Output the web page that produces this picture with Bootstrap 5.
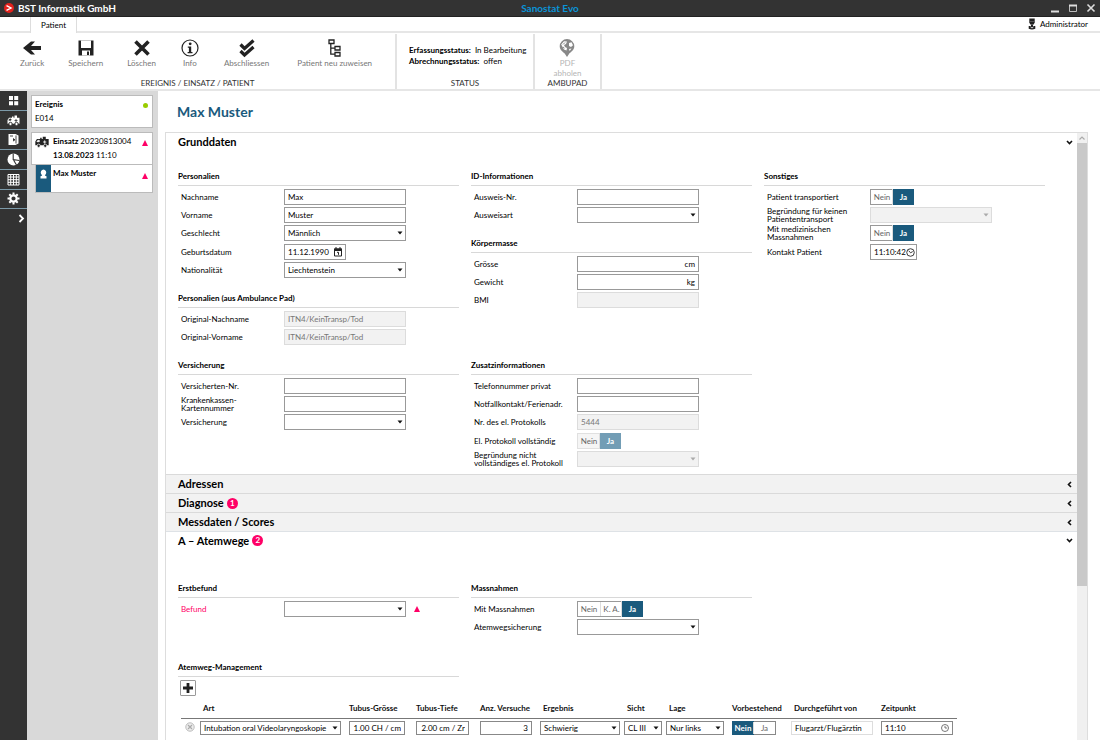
<!DOCTYPE html>
<html lang="de">
<head>
<meta charset="utf-8">
<meta name="viewport" content="width=device-width, initial-scale=1">
<title>Sanostat Evo</title>
<link rel="stylesheet" href="https://cdn.jsdelivr.net/npm/bootstrap@5.3.0/dist/css/bootstrap.min.css">
<style>
:root{--brand:#1a5a7d;--alert:#ff0066;--dark:#333;--rule:#e6e6e6}
body{font:8px/10px Lato,"Open Sans",sans-serif;color:#000;background:#fff}
svg{display:block}
button{font:inherit;color:inherit}
.titlebar{height:17px;background:var(--dark);border-bottom:1px solid #222}
.titlebar .firm{font-size:10px;font-weight:700;color:#fff}
.titlebar .product{font-size:10px;font-weight:700;color:#0a94d8}
.titlebar .side{flex:1 1 0}
.titlebar button,.rail button,.ribbon button,.plain-btn{background:none;border:0;padding:0}
.tabrow{height:16px;border-bottom:2px solid var(--rule)}
.tabrow .tab{margin-left:30px;width:47px;border:solid #ddd;border-width:0 1px;background:#fff;margin-bottom:-2px}
.ribbon{height:58px;border-bottom:2px solid var(--rule)}
.rgroup{border-right:2px solid #e3e3e3;margin:1px 0 0}
.rgroup.actions{width:397px}
.rgroup.state{width:138px}
.rgroup.pad{width:67px}
.ribbon button{color:#777;padding:0 12px}
.ribbon button.wide{padding-left:16px}
.ribbon button svg{width:20px;height:20px;margin:0 auto;color:#222}
.ribbon button:disabled{color:#b5b5b5;padding:0}
.ribbon button:disabled svg{color:#888}
.ribbon .caption{color:#333;line-height:11px}
.state-text{padding:11px 0 0 12px;line-height:11px}
.rail{width:27px;background:var(--dark);color:#fff}
.rail .items{height:137px}
.rail button{border-bottom:1px solid #7c99a8;color:#fff}
.rail button:last-child{border-bottom:0}
.rail svg{width:13px;height:13px}
.tree{width:131px;background:#d9d9d9;padding:4px 5px 0 4px}
.tree .box{background:#fff;border:1px solid #bbb;height:33px;padding:3px 4px 0 3px}
.tree .child{margin:-1px 0 0 4px;height:29px;padding:0 4px 0 0}
.tree .strip{width:15px;background:var(--brand);color:#fff;padding-top:4px}
.tree .child b{padding:3px 0 0 2px}
.dot{width:5px;height:5px;background:#99cc00}
.tri{width:6px;height:6px;fill:var(--alert)}
.patient-name{font-size:14px;line-height:18px;font-weight:700;color:var(--brand);padding:12px 0 11px 12px}
.workarea{padding:0 12px 0 7px}
.panelbox{border:1px solid #ddd;border-width:1px 1px 0}
.track{width:10px;background:#f0f0f0}
.track .up{height:10px;color:#aaa;padding:3px 2px}
.track .thumb{background:#c9c9c9;flex:0 0 443px}
.sect{height:20px;font-size:11px;line-height:14px;font-weight:700;border:0;background:#fff;padding:0 4px 2px 12px;color:#000}
.sect.collapsed{background:#f2f2f2;border-top:1px solid #dadada;height:19px;padding-bottom:0}
.sect.collapsed svg{transform:rotate(90deg)}
.sect svg{width:7px;height:7px}
.count{width:11px;height:11px;background:var(--alert);color:#fff;font-size:8px;line-height:11px;margin-left:3px}
.cols{display:grid;grid-template-columns:repeat(3,1fr);gap:12px;padding:0 32px 0 12px}
.base{padding-top:17px;padding-bottom:5px;grid-template-rows:177px}
.stack{display:flex;flex-direction:column;gap:12px}
.airway{padding-top:31px;row-gap:24px}
.fgroup h3{font-size:8px;line-height:12px;font-weight:700;color:#000;height:16px;margin:0 0 3px;border-bottom:1px solid #d8d8d8}
.rows{display:grid;grid-auto-rows:18px 18px 19px 18px;align-items:start}
.frow{display:grid;grid-template-columns:103px 1fr;padding-left:3px}
.frow>label,.frow>.lbl{line-height:8px;height:16px;display:flex;align-items:center;margin:0}
.form-control,.form-select{font-size:8px;line-height:10px;height:16px;min-height:0;padding:0 3px;border:1px solid #999;border-radius:0;color:#000;width:122px}
.form-select{background-position:right 2px center;background-size:6px 4px;padding-right:9px;background-image:url("data:image/svg+xml,%3Csvg xmlns='http://www.w3.org/2000/svg' viewBox='0 0 6 4'%3E%3Cpath d='M0.5 0.5h5L3 3.6z' fill='%23111'/%3E%3C/svg%3E")}
.form-control:disabled,.form-select:disabled{background-color:#f2f2f2;border-color:#dcdcdc;color:#777;opacity:1}
.form-select:disabled{background-image:url("data:image/svg+xml,%3Csvg xmlns='http://www.w3.org/2000/svg' viewBox='0 0 6 4'%3E%3Cpath d='M0.5 0.5h5L3 3.6z' fill='%23aaa'/%3E%3C/svg%3E")}
.pick{border:1px solid #999;height:16px;width:62px;background:#fff}
.pick input{border:0;height:12px;width:0;flex:1 1 0;min-width:0;padding-right:0}
.pick button{padding-right:2px}
.pick svg{width:10px;height:10px}
.pick.clock{width:47px}
.pick.clock button{padding-right:1px}
.pick.clock svg{width:9px;height:9px}
.unit{width:122px;border:1px solid #999;height:16px}
.unit input{border:0;height:12px;width:0;flex:1 1 0}
.unit span{padding-right:3px}
.seg{border:1px solid #999;height:16px;display:inline-flex;background:#fff}
.seg label{width:22px;line-height:14px;text-align:center;color:#666;border-left:1px solid #ddd}
.seg label:first-of-type{border-left:0}
.seg .btn-check:checked+label{background:var(--brand);color:#fff;font-weight:700;margin:-1px;line-height:16px}
.seg.off{background:#f5f5f5;border-color:#e0e0e0}
.seg.off .btn-check:checked+label{background:#729db5}
.add{margin:0 0 0 2px}
.add.plain-btn{width:16px;height:16px;border:1px solid #999;padding:2px;border-radius:1px}
.managed{padding:0 0 0 15px}
.grid-table{width:776px;table-layout:fixed;border-collapse:collapse}
.grid-table th{height:22px;padding:2px 0 0;font-weight:700;border-bottom:1px solid #777;color:#111}
.grid-table td{padding:2px 8px 0 0}
.grid-table .form-control,.grid-table .form-select,.grid-table .pick{width:100%}
.grid-table .form-control,.grid-table .form-select,.grid-table .seg,.grid-table .pick{height:14px;border-color:#888}
.grid-table .seg label{line-height:12px}
.grid-table .seg .btn-check:checked+label{line-height:14px}
.grid-table td.tight{padding-right:4px}
.grid-table td.loose{padding-right:11px}
.grid-table th.inset{padding-left:3px}
.grid-table .pick input{border:0;height:12px;width:0}
.grid-table .form-control.soft{border-color:#ddd}
.missing>label{color:var(--alert)}
</style>
</head>
<body>
<div class="d-flex flex-column vh-100 overflow-hidden">
  <header class="titlebar d-flex align-items-center flex-shrink-0">
    <div class="side d-flex align-items-center gap-1 ps-1">
      <svg width="10" height="10" viewBox="0 0 10 10"><circle cx="5" cy="5" r="5" fill="#e2211c"/><path d="M2.5 2.6 7 5 2.5 7.4" fill="none" stroke="#fff" stroke-width="1.4"/></svg>
      <span class="firm">BST Informatik GmbH</span>
    </div>
    <div class="product">Sanostat Evo</div>
    <div class="side d-flex justify-content-end align-items-center gap-2 pe-1">
      <button aria-label="Minimieren"><svg width="10" height="10" viewBox="0 0 10 10"><path d="M1 8.5h8" stroke="#ddd" stroke-width="2"/></svg></button>
      <button aria-label="Maximieren"><svg width="10" height="10" viewBox="0 0 10 10"><path d="M1.5 2v6.5h7V2" fill="none" stroke="#bbb"/><path d="M1 2.5h8" stroke="#ddd" stroke-width="2"/></svg></button>
      <button aria-label="Schliessen"><svg width="10" height="10" viewBox="0 0 10 10"><path d="m1.5 1.5 7 7m0-7-7 7" stroke="#ddd" stroke-width="1.6"/></svg></button>
    </div>
  </header>

  <div class="tabrow d-flex justify-content-between flex-shrink-0">
    <button class="tab plain-btn text-center">Patient</button>
    <div class="d-flex align-items-center gap-1 pe-2 me-1">
      <svg width="8" height="12" viewBox="0 0 8 12"><path d="M1.300.5h5.400v4L5.700 6.600H2.300L1.300 4.500z" fill="#222"/><path d="M3 6.500h2V8H3zM.7 8h6.600v2.800q-3.300 1.600-6.600 0z" fill="#222"/><path d="M2.400 8.800 4 10l1.600-1.200" stroke="#fff" stroke-width=".8" fill="none"/><path d="M2 3.500h4" stroke="#777" stroke-width=".6"/></svg>
      <span>Administrator</span>
    </div>
  </div>

  <div class="ribbon d-flex flex-shrink-0">
    <section class="rgroup actions d-flex flex-column">
      <div class="d-flex ps-1 pt-1 ms-1">
        <button><svg viewBox="0 0 20 20"><path d="m1 10 8-6.500h4L9 8h10v4H9l4 4.500H9z" fill="currentColor"/></svg>Zurück</button>
        <button><svg viewBox="0 0 20 20"><path d="M2.500 2.500h15v15h-15z" fill="currentColor"/><path d="M5 2.500h10v7.500H5zM6 12.500h8v5H6z" fill="#fff"/><path d="M11 13.500h2v3.500h-2z" fill="currentColor"/></svg>Speichern</button>
        <button><svg viewBox="0 0 20 20"><path d="m3.500 3.500 13 13m0-13-13 13" stroke="currentColor" stroke-width="3.600"/></svg>Löschen</button>
        <button><svg viewBox="0 0 20 20"><circle cx="10" cy="10" r="8" fill="none" stroke="currentColor" stroke-width="1.200"/><circle cx="10.200" cy="5.800" r="1.400" fill="currentColor"/><path d="M7.800 8.500h3.400v5.500h1.300v1.200H7.600V14h1.300V9.700H7.800z" fill="currentColor"/></svg>Info</button>
        <button><svg viewBox="0 0 20 20"><path d="m3.500 6.500 4 4 9-8M3.500 13l4 4 9-8" fill="none" stroke="currentColor" stroke-width="3.200"/></svg>Abschliessen</button>
        <button class="wide"><svg viewBox="0 0 20 20"><path d="M4 2h5v3.500H4zM10 8.500h5V12h-5zM10 14.500h5V18h-5zM5.800 5.500v10.700H10M5.800 10.200H10" fill="none" stroke="currentColor" stroke-width="1.300"/></svg>Patient neu zuweisen</button>
      </div>
      <div class="caption mt-auto text-center">EREIGNIS / EINSATZ / PATIENT</div>
    </section>
    <section class="rgroup state d-flex flex-column">
      <div class="state-text"><b>Erfassungsstatus:</b>&nbsp; In Bearbeitung<br><b>Abrechnungsstatus:</b>&nbsp; offen</div>
      <div class="caption mt-auto text-center">STATUS</div>
    </section>
    <section class="rgroup pad d-flex flex-column">
      <div class="pt-1 text-center"><button disabled><svg viewBox="0 0 20 20"><path d="M10 1a7.300 7.300 0 0 0-7.300 7.300C2.700 12.500 7 14.500 8 16l2 3 2-3c1-1.500 5.300-3.500 5.300-7.700A7.300 7.300 0 0 0 10 1z" fill="currentColor"/><path d="M4.200 6.500 7 3.300l3 .2-1 2.500-2 1 1 2 2 1-.500 2.500L7 11.500zM12 5l2.500-.800 1.500 3-2 1.800-2-1zM12 11l2.500-.500-1.800 2.500z" fill="#fff"/><path d="M6 6.500 8 4.500M6 9l1.500 1.200" stroke="currentColor"/></svg>PDF<br>abholen</button></div>
      <div class="caption mt-auto text-center">AMBUPAD</div>
    </section>
  </div>

  <div class="d-flex flex-grow-1 overflow-hidden">
    <nav class="rail flex-shrink-0" aria-label="Bereiche">
      <div class="items d-flex flex-column">
        <button class="flex-fill d-flex align-items-center justify-content-center" aria-label="Übersicht"><svg viewBox="0 0 13 13"><path d="M2 2h4v4H2zM7.200 2h4v4h-4zM2 7.200h4v4H2zM7.200 7.200h4v4h-4z" fill="#fff"/></svg></button>
        <button class="flex-fill d-flex align-items-center justify-content-center" aria-label="Einsätze"><svg viewBox="0 0 13 13"><path d="M.5 6 2 3.800h3V2.500h1.500v1.300h1V1.500H10v2.300h2.500v6H.5z" fill="#fff"/><circle cx="3.500" cy="10" r="1.700" fill="#fff" stroke="#333"/><circle cx="9.500" cy="10" r="1.700" fill="#fff" stroke="#333"/><path d="M9 5v3M7.500 6.500h3M1.800 6.200 2.600 5H4v1.200z" stroke="#333" stroke-width=".8" fill="#333"/></svg></button>
        <button class="flex-fill d-flex align-items-center justify-content-center" aria-label="Protokolle"><svg viewBox="0 0 13 13"><path d="M1.500 1h7l3 1.500v8L8.500 12h-7z" fill="#fff"/><path d="M9 2.500v8M3 3h3M6 5.500l2 1.300-2 1.300" stroke="#333" fill="#333" stroke-width=".9"/></svg></button>
        <button class="flex-fill d-flex align-items-center justify-content-center" aria-label="Statistik"><svg viewBox="0 0 13 13"><circle cx="6.500" cy="6.500" r="6" fill="#fff"/><path d="M6.200.5v6l6 1M6.200 6.500 9.500 12" stroke="#333" stroke-width="1.100" fill="none"/></svg></button>
        <button class="flex-fill d-flex align-items-center justify-content-center" aria-label="Tabelle"><svg viewBox="0 0 13 13"><path d="M1 1.500h11v10.500H1zM1 4h11M1 6.700h11M1 9.300h11M3.700 1.500V12M6.500 1.500V12M9.300 1.500V12" stroke="#fff" fill="none"/></svg></button>
        <button class="flex-fill d-flex align-items-center justify-content-center" aria-label="Einstellungen"><svg viewBox="0 0 13 13"><circle cx="6.500" cy="6.500" r="3.200" fill="none" stroke="#fff" stroke-width="2.200"/><path d="M6.500.5v2.200M6.500 10.300v2.200M.5 6.500h2.200M10.300 6.500h2.200M2.300 2.300l1.500 1.500M9.200 9.200l1.500 1.500M2.300 10.700l1.500-1.500M9.200 3.800l1.500-1.500" stroke="#fff" stroke-width="2"/></svg></button>
        <button class="flex-fill d-flex align-items-center justify-content-end" aria-label="Erweitern"><svg viewBox="0 0 13 13"><path d="m5.500 3 3.500 3.500L5.500 10" fill="none" stroke="#fff" stroke-width="1.800"/></svg></button>
      </div>
    </nav>

    <aside class="tree flex-shrink-0">
      <div class="box d-flex justify-content-between mb-1">
        <div><b class="d-block mb-1">Ereignis</b>E014</div>
        <span class="dot rounded-circle mt-1 d-block"></span>
      </div>
      <div class="box d-flex">
        <svg class="me-1" width="14" height="12" viewBox="0 0 13 11"><path d="M.3 5 1.800 2.800h3V1.500h1.400v1.300h1V.6H10v2.200h2.700v5.800H.3z" fill="#222"/><circle cx="3.400" cy="9" r="1.500" fill="#222" stroke="#fff" stroke-width=".7"/><circle cx="9.500" cy="9" r="1.500" fill="#222" stroke="#fff" stroke-width=".7"/><path d="M9 4v3M7.500 5.500h3M1.800 5.200 2.600 4H4v1.200z" stroke="#fff" stroke-width=".8" fill="#fff"/></svg>
        <div class="flex-fill"><b>Einsatz</b> 20230813004<div class="pt-1"><b>13.08.2023</b> 11:10</div></div>
        <svg class="tri mt-1" viewBox="0 0 6 6"><path d="m3 0 3 6H0z"/></svg>
      </div>
      <div class="box child d-flex">
        <div class="strip"><svg width="14" height="11" viewBox="0 0 14 11"><path d="M7.500.5a3 3 0 0 1 2.500 4.200L8.800 6.500l1.700.8v2.200h-6V7.300l1.700-.8L5 4.700A3 3 0 0 1 7.500.5z" fill="#fff"/></svg></div>
        <b class="flex-fill">Max Muster</b>
        <svg class="tri mt-2" viewBox="0 0 6 6"><path d="m3 0 3 6H0z"/></svg>
      </div>
    </aside>

    <main class="workarea d-flex flex-column flex-fill overflow-hidden">
      <h1 class="patient-name m-0">Max Muster</h1>
      <div class="panelbox d-flex flex-fill overflow-hidden">
        <div class="flex-fill overflow-hidden">
          <button class="sect d-flex align-items-center w-100 text-start" data-bs-toggle="collapse" data-bs-target="#grund" aria-expanded="true"><span class="flex-fill">Grunddaten</span><svg viewBox="0 0 7 7"><path d="m1 2 2.500 2.500L6 2" fill="none" stroke="#111" stroke-width="1.600"/></svg></button>
          <div class="collapse show" id="grund">
            <div class="cols base">
              <div class="stack">
                <section class="fgroup"><h3>Personalien</h3><div class="rows">
                  <div class="frow"><label for="nach">Nachname</label><input class="form-control" id="nach" value="Max"></div>
                  <div class="frow"><label for="vor">Vorname</label><input class="form-control" id="vor" value="Muster"></div>
                  <div class="frow"><label for="sex">Geschlecht</label><select class="form-select" id="sex"><option>Männlich</option></select></div>
                  <div class="frow"><label for="geb">Geburtsdatum</label><div class="pick d-flex align-items-center"><input class="form-control" id="geb" value="11.12.1990"><button class="plain-btn" aria-label="Kalender"><svg viewBox="0 0 10 10"><path d="M1.500 2h7v7h-7z" fill="none" stroke="#222"/><path d="M1 1.500h8v2.500H1z" fill="#222"/><path d="M3 0v2M7 0v2" stroke="#222"/><path d="M4 5.300h1.500v2.500" stroke="#222" fill="none"/></svg></button></div></div>
                  <div class="frow"><label for="nat">Nationalität</label><select class="form-select" id="nat"><option>Liechtenstein</option></select></div>
                </div></section>
                <section class="fgroup"><h3>Personalien (aus Ambulance Pad)</h3><div class="rows">
                  <div class="frow"><label for="onach">Original-Nachname</label><input class="form-control" id="onach" value="ITN4/KeinTransp/Tod" disabled></div>
                  <div class="frow"><label for="ovor">Original-Vorname</label><input class="form-control" id="ovor" value="ITN4/KeinTransp/Tod" disabled></div>
                </div></section>
              </div>
              <div class="stack">
                <section class="fgroup"><h3>ID-Informationen</h3><div class="rows">
                  <div class="frow"><label for="ausnr">Ausweis-Nr.</label><input class="form-control" id="ausnr"></div>
                  <div class="frow"><label for="ausart">Ausweisart</label><select class="form-select" id="ausart"><option></option></select></div>
                </div></section>
                <section class="fgroup"><h3>Körpermasse</h3><div class="rows">
                  <div class="frow"><label for="gr">Grösse</label><div class="unit d-flex align-items-center"><input class="form-control" id="gr"><span>cm</span></div></div>
                  <div class="frow"><label for="gew">Gewicht</label><div class="unit d-flex align-items-center"><input class="form-control" id="gew"><span>kg</span></div></div>
                  <div class="frow"><label for="bmi">BMI</label><input class="form-control" id="bmi" disabled></div>
                </div></section>
              </div>
              <div class="stack">
                <section class="fgroup"><h3>Sonstiges</h3><div class="rows">
                  <div class="frow"><span class="lbl">Patient transportiert</span><div><div class="seg" role="group" aria-label="Patient transportiert"><input class="btn-check" type="radio" name="tr" id="tr0"><label for="tr0">Nein</label><input class="btn-check" type="radio" name="tr" id="tr1" checked><label for="tr1">Ja</label></div></div></div>
                  <div class="frow"><label for="bkt">Begründung für keinen<br>Patiententransport</label><select class="form-select" id="bkt" disabled><option></option></select></div>
                  <div class="frow"><span class="lbl">Mit medizinischen<br>Massnahmen</span><div><div class="seg" role="group" aria-label="Mit medizinischen Massnahmen"><input class="btn-check" type="radio" name="mm" id="mm0"><label for="mm0">Nein</label><input class="btn-check" type="radio" name="mm" id="mm1" checked><label for="mm1">Ja</label></div></div></div>
                  <div class="frow"><label for="kp">Kontakt Patient</label><div class="pick clock d-flex align-items-center"><input class="form-control" id="kp" value="11:10:42"><button class="plain-btn" aria-label="Uhrzeit"><svg viewBox="0 0 10 10"><circle cx="5" cy="5" r="4.200" fill="none" stroke="#222"/><path d="M3 3l2 2.300L7.500 4" stroke="#222" fill="none"/></svg></button></div></div>
                </div></section>
              </div>
              <section class="fgroup"><h3>Versicherung</h3><div class="rows">
                <div class="frow"><label for="vnr">Versicherten-Nr.</label><input class="form-control" id="vnr"></div>
                <div class="frow"><label for="kk">Krankenkassen-<br>Kartennummer</label><input class="form-control" id="kk"></div>
                <div class="frow"><label for="vers">Versicherung</label><select class="form-select" id="vers"><option></option></select></div>
              </div></section>
              <section class="fgroup"><h3>Zusatzinformationen</h3><div class="rows">
                <div class="frow"><label for="tel">Telefonnummer privat</label><input class="form-control" id="tel"></div>
                <div class="frow"><label for="notf">Notfallkontakt/Ferienadr.</label><input class="form-control" id="notf"></div>
                <div class="frow"><label for="prot">Nr. des el. Protokolls</label><input class="form-control" id="prot" value="5444" disabled></div>
                <div class="frow"><span class="lbl">El. Protokoll vollständig</span><div><div class="seg off" role="group" aria-label="El. Protokoll vollständig"><input class="btn-check" type="radio" name="ep" id="ep0" disabled><label for="ep0">Nein</label><input class="btn-check" type="radio" name="ep" id="ep1" checked disabled><label for="ep1">Ja</label></div></div></div>
                <div class="frow"><label for="bnv">Begründung nicht<br>vollständiges el. Protokoll</label><select class="form-select" id="bnv" disabled><option></option></select></div>
              </div></section>
            </div>
          </div>
          <button class="sect collapsed d-flex align-items-center w-100 text-start"><span class="flex-fill">Adressen</span><svg viewBox="0 0 7 7"><path d="m1 2 2.500 2.500L6 2" fill="none" stroke="#111" stroke-width="1.600"/></svg></button>
          <button class="sect collapsed d-flex align-items-center w-100 text-start"><span class="flex-fill d-flex align-items-center">Diagnose <span class="count rounded-circle text-center">1</span></span><svg viewBox="0 0 7 7"><path d="m1 2 2.500 2.500L6 2" fill="none" stroke="#111" stroke-width="1.600"/></svg></button>
          <button class="sect collapsed d-flex align-items-center w-100 text-start"><span class="flex-fill">Messdaten / Scores</span><svg viewBox="0 0 7 7"><path d="m1 2 2.500 2.500L6 2" fill="none" stroke="#111" stroke-width="1.600"/></svg></button>
          <button class="sect d-flex align-items-center w-100 text-start border-top" data-bs-toggle="collapse" data-bs-target="#atem" aria-expanded="true"><span class="flex-fill d-flex align-items-center">A – Atemwege <span class="count rounded-circle text-center">2</span></span><svg viewBox="0 0 7 7"><path d="m1 2 2.500 2.500L6 2" fill="none" stroke="#111" stroke-width="1.600"/></svg></button>
          <div class="collapse show" id="atem">
            <div class="cols airway">
              <section class="fgroup"><h3>Erstbefund</h3><div class="rows">
                <div class="frow missing"><label for="bef">Befund</label><div class="d-flex align-items-center gap-2"><select class="form-select" id="bef"><option></option></select><svg class="tri" viewBox="0 0 6 6"><path d="m3 0 3 6H0z"/></svg></div></div>
              </div></section>
              <section class="fgroup"><h3>Massnahmen</h3><div class="rows">
                <div class="frow"><span class="lbl">Mit Massnahmen</span><div><div class="seg" role="group" aria-label="Mit Massnahmen"><input class="btn-check" type="radio" name="ma" id="ma0"><label for="ma0">Nein</label><input class="btn-check" type="radio" name="ma" id="ma1"><label for="ma1">K. A.</label><input class="btn-check" type="radio" name="ma" id="ma2" checked><label for="ma2">Ja</label></div></div></div>
                <div class="frow"><label for="asi">Atemwegsicherung</label><select class="form-select" id="asi"><option></option></select></div>
              </div></section>
              <div></div>
              <section class="fgroup"><h3>Atemweg-Management</h3>
                <button class="add plain-btn" aria-label="Hinzufügen"><svg width="10" height="10" viewBox="0 0 10 10"><path d="M5 0v10M0 5h10" stroke="#222" stroke-width="2.800"/></svg></button>
              </section>
            </div>
            <div class="managed">
              <table class="grid-table">
                <colgroup><col width="19"><col width="149"><col width="67"><col width="64"><col width="60"><col width="84"><col width="42"><col width="66"><col width="59"><col width="90"><col width="76"></colgroup>
                <thead><tr><th></th><th class="inset">Art</th><th>Tubus-Grösse</th><th>Tubus-Tiefe</th><th>Anz. Versuche</th><th class="inset">Ergebnis</th><th class="inset">Sicht</th><th class="inset">Lage</th><th>Vorbestehend</th><th class="inset">Durchgeführt von</th><th>Zeitpunkt</th></tr></thead>
                <tbody><tr>
                  <td><button class="plain-btn ms-1" aria-label="Entfernen"><svg width="10" height="10" viewBox="0 0 10 10"><circle cx="5" cy="5" r="4.200" fill="#eee" stroke="#bbb"/><path d="m3 3 4 4m0-4L3 7" stroke="#aaa" stroke-width="1.200"/></svg></button></td>
                  <td><select class="form-select" aria-label="Art"><option>Intubation oral Videolaryngoskopie</option></select></td>
                  <td class="loose"><input class="form-control text-end" aria-label="Tubus-Grösse" value="1.00 CH / cm"></td>
                  <td class="loose"><input class="form-control text-end" aria-label="Tubus-Tiefe" value="2.00 cm / Zr"></td>
                  <td><input class="form-control text-end" aria-label="Anz. Versuche" value="3"></td>
                  <td class="tight"><select class="form-select" aria-label="Ergebnis"><option>Schwierig</option></select></td>
                  <td class="tight"><select class="form-select" aria-label="Sicht"><option>CL III</option></select></td>
                  <td><select class="form-select" aria-label="Lage"><option>Nur links</option></select></td>
                  <td><div class="seg" role="group" aria-label="Vorbestehend"><input class="btn-check" type="radio" name="vb" id="vb0" checked><label for="vb0">Nein</label><input class="btn-check" type="radio" name="vb" id="vb1"><label for="vb1">Ja</label></div></td>
                  <td><input class="form-control soft" aria-label="Durchgeführt von" value="Flugarzt/Flugärztin"></td>
                  <td class="tight"><div class="pick d-flex align-items-center"><input class="form-control" aria-label="Zeitpunkt" value="11:10"><button class="plain-btn" aria-label="Uhrzeit"><svg viewBox="0 0 10 10"><circle cx="5" cy="5" r="3.500" fill="none" stroke="#555" stroke-width=".8"/><path d="M5 3v2h2" stroke="#555" stroke-width=".8" fill="none"/></svg></button></div></td>
                </tr></tbody>
              </table>
            </div>
          </div>
        </div>
        <div class="track d-flex flex-column flex-shrink-0" aria-hidden="true">
          <div class="up"><svg width="6" height="4" viewBox="0 0 6 4"><path d="m.5 3.500 2.500-2.500 2.500 2.500" fill="none" stroke="currentColor" stroke-width="1.200"/></svg></div>
          <div class="thumb"></div>
        </div>
      </div>
    </main>
  </div>
</div>
<script src="https://cdn.jsdelivr.net/npm/bootstrap@5.3.0/dist/js/bootstrap.bundle.min.js"></script>
</body>
</html>
